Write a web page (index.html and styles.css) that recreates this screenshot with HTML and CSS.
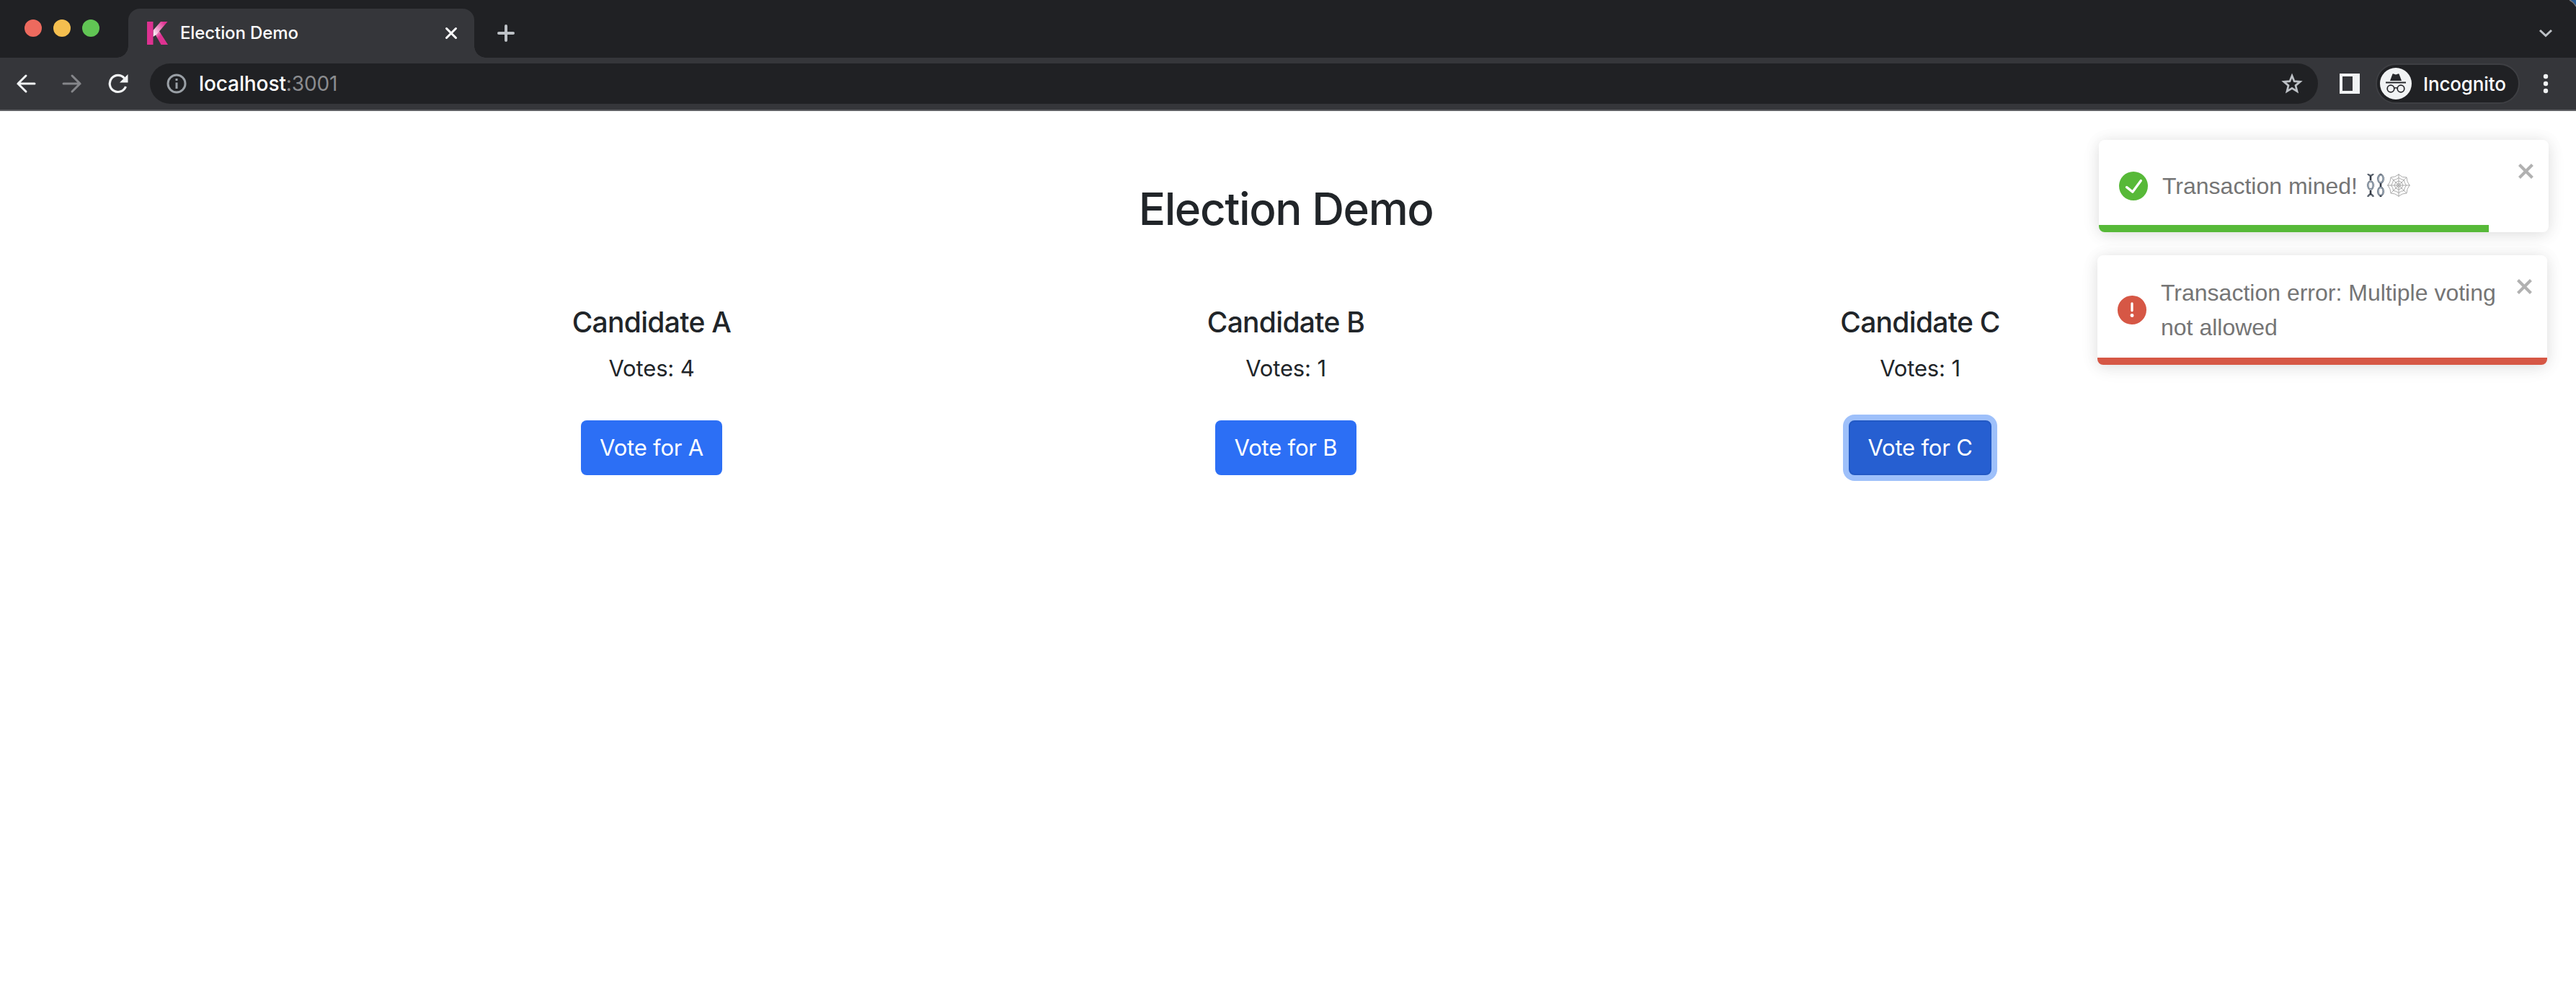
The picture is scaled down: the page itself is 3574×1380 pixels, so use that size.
FILE: index.html
```html
<!DOCTYPE html>
<html lang="en">
<head>
<meta charset="utf-8">
<title>Election Demo</title>
<link rel="stylesheet" href="styles.css">
</head>
<body>
<header class="browser">
  <div class="tab-strip">
    <div class="lights"><i class="light red"></i><i class="light yellow"></i><i class="light green"></i></div>
    <div class="tab">
      <svg class="favicon" width="30" height="32" viewBox="0 0 30 32">
        <defs>
          <linearGradient id="arm" x1="0" y1="1" x2="1" y2="0"><stop offset=".05" stop-color="#fff"/><stop offset=".4" stop-color="#f0a5cf"/><stop offset=".85" stop-color="#de3291"/></linearGradient>
          <linearGradient id="leg" x1="0" y1="0" x2="1" y2="1"><stop offset="0" stop-color="#f4bfdc"/><stop offset=".4" stop-color="#de3291"/></linearGradient>
        </defs>
        <path d="M11 17l5.500-4.500L29 32H19.500z" fill="url(#leg)"/>
        <path d="M19 0h9.500L13.500 17.500 8.500 21V12z" fill="url(#arm)"/>
        <path d="M0 0h8.500v32H0z" fill="#de3291"/>
      </svg>
      <span class="tab-title">Election Demo</span>
      <svg class="tab-close" width="18" height="18" viewBox="0 0 18 18"><path d="M2.500 2.500l13 13M15.500 2.500l-13 13" stroke="#fff" stroke-width="3" stroke-linecap="round"/></svg>
    </div>
    <svg class="new-tab" width="24" height="24" viewBox="0 0 24 24"><path d="M12 2v20M2 12h20" stroke="#bdc1c6" stroke-width="4" stroke-linecap="round"/></svg>
    <svg class="tab-menu" width="20" height="12" viewBox="0 0 20 12"><path d="M2 2l8 7.500L18 2" fill="none" stroke="#bdc1c6" stroke-width="3"/></svg>
    <svg class="corner" width="10" height="10" viewBox="0 0 10 10"><path d="M2 0h8v8Q7 3 2 0z" fill="#2a5f97"/><path d="M1 0q6 3 9 9" fill="none" stroke="#77797c" stroke-width="1.500"/></svg>
  </div>
  <div class="toolbar">
    <svg class="back" width="28" height="28" viewBox="0 0 28 28"><path d="M26 14H3M14 3L3 14l11 11" fill="none" stroke="#f1f3f4" stroke-width="3" stroke-linecap="round"/></svg>
    <svg class="forward" width="28" height="28" viewBox="0 0 28 28"><path d="M2 14h23M14 3l11 11-11 11" fill="none" stroke="#85868a" stroke-width="3" stroke-linecap="round"/></svg>
    <svg class="reload" width="28" height="28" viewBox="0 0 28 28"><path d="M22.500 6.500A11.500 11.500 0 1 0 24.500 18" fill="none" stroke="#f1f3f4" stroke-width="3.200"/><path d="M27.500 1v11.500H16z" fill="#f1f3f4"/></svg>
    <div class="address">
      <svg width="28" height="28" viewBox="0 0 28 28"><circle cx="14" cy="14" r="12" fill="none" stroke="#9aa0a6" stroke-width="3"/><path d="M14 7v3M14 12.500V21" stroke="#9aa0a6" stroke-width="3"/></svg>
      <span class="url">localhost<span class="port">:3001</span></span>
      <svg class="star" width="30" height="30" viewBox="0 0 30 30"><path d="M15 4l3.100 7.700 8.200.6-6.300 5.300 2 8.100-7-4.400-7 4.400 2-8.100-6.300-5.300 8.200-.6z" fill="none" stroke="#bdc1c6" stroke-width="2.700"/></svg>
    </div>
    <svg class="panel" width="28" height="28" viewBox="0 0 28 28"><path fill-rule="evenodd" d="M0 0h28v28H0zM4 4v20h14V4z" fill="#f1f3f4"/></svg>
    <div class="profile">
      <svg width="44" height="44" viewBox="0 0 44 44">
        <circle cx="22" cy="22" r="22" fill="#f1f3f4"/>
        <path d="M17.500 8.500q.8-.4 1.500 0l3 1 3-1q.7-.4 1.500 0l3.500 9.500H14z" fill="#27282c"/><path d="M8 20.500h28" stroke="#27282c" stroke-width="2"/>
        <g fill="none" stroke="#27282c" stroke-width="1.700"><circle cx="15" cy="29" r="4.800"/><circle cx="29" cy="29" r="4.800"/><path d="M19.500 28.500q2.500-1.500 5 0"/></g>
      </svg>
      <span>Incognito</span>
    </div>
    <svg class="more" width="8" height="28" viewBox="0 0 8 28"><g fill="#f1f3f4"><circle cx="4" cy="4" r="3.200"/><circle cx="4" cy="14" r="3.200"/><circle cx="4" cy="24" r="3.200"/></g></svg>
  </div>
</header>
<main class="page">
  <h1>Election Demo</h1>
  <div class="candidates">
    <section class="candidate"><h2>Candidate A</h2><p>Votes: 4</p><button class="vote">Vote for A</button></section>
    <section class="candidate"><h2>Candidate B</h2><p>Votes: 1</p><button class="vote">Vote for B</button></section>
    <section class="candidate"><h2>Candidate C</h2><p>Votes: 1</p><button class="vote active">Vote for C</button></section>
  </div>
</main>
<aside class="toasts">
  <div class="toast success">
    <svg class="status" viewBox="0 0 24 24"><path d="M12 0a12 12 0 1012 12A12.014 12.014 0 0012 0zm6.927 8.200l-6.845 9.289a1.011 1.011 0 01-1.430.188l-4.888-3.908a1 1 0 111.250-1.562l4.076 3.261 6.227-8.451a1 1 0 111.610 1.183z"/></svg>
    <div class="message">Transaction mined! <svg class="emoji" width="60" height="32" viewBox="0 0 60 32">
      <g fill="none" stroke="#5d6570" stroke-width="2.600"><ellipse cx="5" cy="16" rx="3.700" ry="5.500"/><ellipse cx="19" cy="7" rx="3.700" ry="5.500"/><ellipse cx="19" cy="24.500" rx="3.700" ry="5.500"/><path d="M1 0q4 5 8 0M1 32q4-7 8 0"/></g>
      <g fill="none" stroke="#b4c6d8" stroke-width="1"><ellipse cx="5" cy="16" rx="3.700" ry="5.500"/><ellipse cx="19" cy="7" rx="3.700" ry="5.500"/><ellipse cx="19" cy="24.500" rx="3.700" ry="5.500"/></g>
      <path d="M5 3v6M5 23v6M19 0v1M19 13v5M19 30v2" stroke="#343a45" stroke-width="2.600"/>
      <g fill="none" stroke="#aaa" stroke-width="1"><path d="M44 0v32M28 16h32M33 5l22 22M55 5L33 27"/><path d="M44 1q5 5 11 4 0 6 4 11-4 5-4 11-6 0-11 4-5-4-11-4 0-6-4-11 4-5 4-11 6 0 11-4z"/><path d="M44 5.500q4 3 7.500 3 0 4 3 7.500-3 4-3 7.500-4 0-7.500 3-4-3-7.500-3 0-4-3-7.500 3-4 3-7.500 4 0 7.500-3z"/><path d="M44 10l4 2 2 4-2 4-4 2-4-2-2-4 2-4z"/><circle cx="44" cy="16" r="2.500"/></g>
    </svg></div>
    <svg class="close" width="28" height="32" viewBox="0 0 14 16"><path d="M7.710 8.230l3.750 3.750-1.480 1.480-3.750-3.750-3.750 3.750L1 11.980l3.750-3.750L1 4.480 2.480 3l3.750 3.750L9.980 3l1.480 1.480-3.750 3.750z"/></svg>
    <div class="progress" style="width:86.700%"></div>
  </div>
  <div class="toast error">
    <svg class="status" viewBox="0 0 24 24"><path d="M11.983 0a12.206 12.206 0 00-8.510 3.653A11.800 11.800 0 000 12.207 11.779 11.779 0 0011.800 24h.214A12.111 12.111 0 0024 11.791 11.766 11.766 0 0011.983 0zM10.500 16.542a1.476 1.476 0 011.449-1.530h.027a1.527 1.527 0 011.523 1.470 1.475 1.475 0 01-1.449 1.530h-.027a1.529 1.529 0 01-1.523-1.470zM11 12.500v-6a1 1 0 012 0v6a1 1 0 11-2 0z"/></svg>
    <div class="message">Transaction error: Multiple voting<br>not allowed</div>
    <svg class="close" width="28" height="32" viewBox="0 0 14 16"><path d="M7.710 8.230l3.750 3.750-1.480 1.480-3.750-3.750-3.750 3.750L1 11.980l3.750-3.750L1 4.480 2.480 3l3.750 3.750L9.980 3l1.480 1.480-3.750 3.750z"/></svg>
    <div class="progress" style="width:100%"></div>
  </div>
</aside>
</body>
</html>
```
FILE: styles.css
```css
* { box-sizing: border-box; }
body { margin: 0; min-height: 1380px; background: #fff; color: #212529; font-family: Inter, "Liberation Sans", sans-serif; }
svg { display: block; flex: none; }
h1, h2, p { margin: 0; white-space: nowrap; }

.browser { height: 154px; background: #35363a; border-bottom: 2px solid #5f6064; }
.tab-strip { display: flex; height: 80px; padding-left: 34px; background: #202124; }
.lights { display: flex; gap: 16px; margin-top: 27px; width: 144px; }
.light { width: 24px; height: 24px; border-radius: 50%; }
.red { background: #ed6a5e; }
.yellow { background: #f5bf4f; }
.green { background: #61c554; }
.tab { position: relative; display: flex; align-items: center; width: 480px; height: 68px; margin-top: 12px; padding: 0 23px 0 26px; background: #35363a; border-radius: 16px 16px 0 0; color: #fff; }
.tab::before, .tab::after { content: ""; position: absolute; bottom: 0; width: 16px; height: 16px; }
.tab::before { left: -16px; background: radial-gradient(circle at 0 0, #202124 15.500px, #35363a 16px); }
.tab::after { right: -16px; background: radial-gradient(circle at 100% 0, #202124 15.500px, #35363a 16px); }
.tab-title { margin: 0 auto 0 16px; font-size: 24px; font-weight: 500; letter-spacing: -0.100px; line-height: 32px; }
.new-tab { margin: 34px 0 0 32px; }
.tab-menu { margin: 40px 22px 0 auto; }
.toolbar { display: flex; align-items: center; height: 72px; padding-left: 22px; }
.forward { margin-left: 36px; }
.reload { margin-left: 36px; }
.address { display: flex; align-items: center; width: 3008px; height: 56px; margin-left: 30px; padding: 0 21px 0 23px; border-radius: 28px; background: #202124; }
.url { margin: 0 auto 0 17px; font-size: 28px; letter-spacing: -0.100px; color: #fff; font-weight: 500; }
.port { color: #8b8c8f; font-weight: 400; }
.panel { margin-left: 30px; }
.profile { display: flex; align-items: center; width: 200px; height: 56px; margin-left: 22px; padding-left: 4px; border: 2px solid #3e3f43; border-radius: 28px; background: #202124; color: #fff; font-size: 26px; font-weight: 500; letter-spacing: -0.150px; }
.profile span { margin-left: 16px; }
.more { margin-left: 32px; }

.page { width: 3568px; padding-top: 97px; text-align: center; }
h1 { font-size: 62px; font-weight: 500; letter-spacing: -1.400px; line-height: 77px; }
.candidates { display: grid; grid-template-columns: repeat(3, 880px); justify-content: center; margin-top: 95px; }
.candidate { display: flex; flex-direction: column; align-items: center; }
h2 { font-size: 39px; font-weight: 500; letter-spacing: -0.700px; line-height: 48px; }
.candidate p { margin-top: 16px; font-size: 31px; letter-spacing: -0.150px; line-height: 48px; }
.vote { width: 196px; height: 76px; margin-top: 48px; padding: 0; border: 0; border-radius: 8px; background: #2c6ff5; color: #fff; font: 400 31px/48px Inter, sans-serif; letter-spacing: -0.200px; white-space: nowrap; }
.vote.active { width: 198px; background: #265fd1; border: 2px solid #2259c5; box-shadow: 0 0 0 8px #9ec0fa; }

.toasts { position: absolute; top: 194px; right: 38px; width: 626px; font-family: "Liberation Sans", Arial, sans-serif; }
.toast { position: relative; display: flex; align-items: center; width: 624px; height: 128px; padding: 0 28px; border-radius: 8px; background: #fff; color: #757575; box-shadow: 0 2px 20px rgba(0, 0, 0, .1), 0 4px 30px rgba(0, 0, 0, .05); overflow: hidden; }
.success { margin-left: 2px; --accent: #57b938; }
.error { height: 152px; margin-top: 32px; --accent: #d65745; }
.status { width: 40px; height: 40px; margin-right: 20px; fill: var(--accent); }
.message { font-size: 32px; line-height: 48px; white-space: nowrap; }
.emoji { display: inline-block; margin-left: 4px; vertical-align: -4px; }
.close { position: absolute; right: 16px; top: 27px; opacity: .3; }
.progress { position: absolute; left: 0; bottom: 0; height: 10px; background: var(--accent); }
```
